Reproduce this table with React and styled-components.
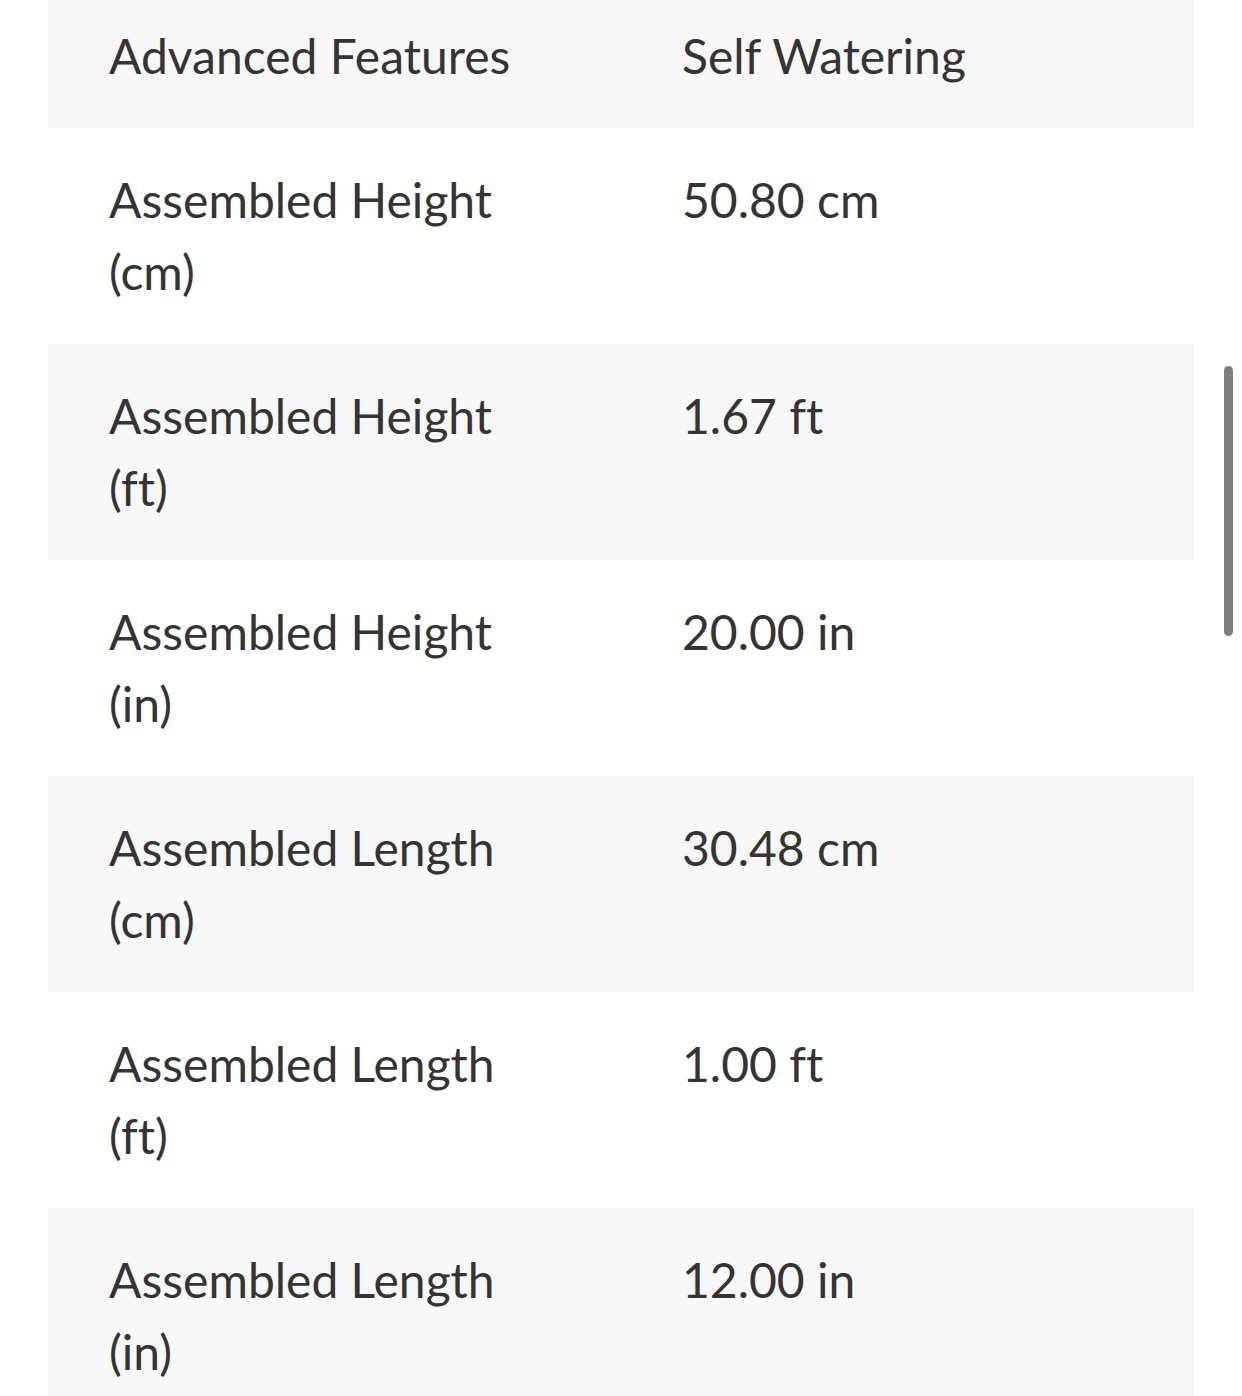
import React from "react";
import styled, { createGlobalStyle } from "styled-components";

const GlobalStyle = createGlobalStyle`
  html, body {
    margin: 0;
    padding: 0;
    background: #ffffff;
    overflow: hidden;
  }
  body {
    font-family: Lato, "Open Sans", sans-serif;
  }
`;

const Page = styled.div`
  padding: 0 48px;
  height: 1396px;
  overflow: hidden;
`;

const Table = styled.table`
  width: 100%;
  margin-top: -16px;
  border-collapse: collapse;
  table-layout: fixed;
`;

const Row = styled.tr`
  background: ${(p) => (p.$shaded ? "#f7f7f7" : "#ffffff")};
`;

const Cell = styled.td`
  padding: 36px 60px 36px 61px;
  font-size: 48px;
  line-height: 72px;
  color: #343434;
  vertical-align: top;
  font-weight: 400;
  font-variant-ligatures: none;
`;

const Scrollbar = styled.div`
  position: fixed;
  top: 366px;
  right: 9px;
  width: 9px;
  height: 270px;
  border-radius: 5px;
  background: #7f7f7f;
`;

const specs = [
  ["Advanced Features", "Self Watering"],
  ["Assembled Height (cm)", "50.80 cm"],
  ["Assembled Height (ft)", "1.67 ft"],
  ["Assembled Height (in)", "20.00 in"],
  ["Assembled Length (cm)", "30.48 cm"],
  ["Assembled Length (ft)", "1.00 ft"],
  ["Assembled Length (in)", "12.00 in"],
];

const App = () => {
  return (
    <Page>
      <GlobalStyle />
      <Table>
        <tbody>
          {specs.map(([label, value], i) => (
            <Row key={label} $shaded={i % 2 === 0}>
              <Cell>{label}</Cell>
              <Cell>{value}</Cell>
            </Row>
          ))}
        </tbody>
      </Table>
      <Scrollbar />
    </Page>
  );
};

export default App;
